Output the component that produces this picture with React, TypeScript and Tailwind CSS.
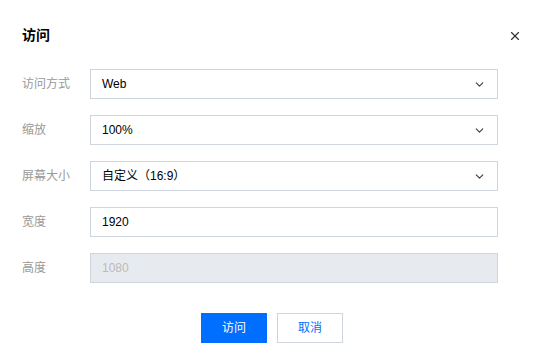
import { ChevronDown, X } from "lucide-react";

type Row = {
  label: string;
  value: string;
  kind: "select" | "input" | "disabled";
};

const rows: Row[] = [
  { label: "访问方式", value: "Web", kind: "select" },
  { label: "缩放", value: "100%", kind: "select" },
  { label: "屏幕大小", value: "自定义（16:9）", kind: "select" },
  { label: "宽度", value: "1920", kind: "input" },
  { label: "高度", value: "1080", kind: "disabled" },
];

function Field({ row }: { row: Row }) {
  const disabled = row.kind === "disabled";
  return (
    <div className="flex items-center h-[30px]">
      <div className="w-[68px] text-xs text-[#999]">{row.label}</div>
      <div
        className={
          disabled
            ? "flex items-center h-[30px] w-[408px] border border-[#cfd5de] bg-[#e7eaef] px-[11px] text-xs text-[#bbb]"
            : "flex items-center h-[30px] w-[408px] border border-[#cfd5de] bg-white px-[11px] text-xs text-black"
        }
      >
        <span className="flex-1">{row.value}</span>
        {row.kind === "select" && <ChevronDown size={13} strokeWidth={2.2} className="text-[#444]" />}
      </div>
    </div>
  );
}

export default function App() {
  return (
    <div
      className="w-[542px] h-[361px] bg-white relative"
      style={{ fontFamily: '"Liberation Sans", "Noto Sans CJK SC", sans-serif' }}
    >
      <div className="flex items-start justify-between pl-[22px] pr-[20px] pt-[26px]">
        <h2 className="text-sm font-bold text-black leading-[18px]">访问</h2>
        <X size={14} strokeWidth={2} className="text-[#333] mt-[3px]" />
      </div>
      <div className="flex flex-col gap-4 pl-[22px] mt-[25px]">
        {rows.map((r) => (
          <Field key={r.label} row={r} />
        ))}
      </div>
      <div className="flex justify-center gap-[10px] mt-[30px] pl-[2px]">
        <button className="h-[30px] w-[66px] bg-[#006eff] text-white text-xs">访问</button>
        <button className="h-[30px] w-[66px] border border-[#cfd5de] bg-white text-[#006eff] text-xs">
          取消
        </button>
      </div>
    </div>
  );
}
